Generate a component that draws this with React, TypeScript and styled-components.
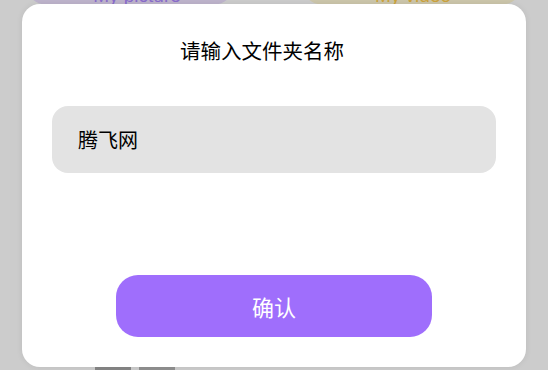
import React from 'react'
import styled, { createGlobalStyle } from 'styled-components'

const GlobalStyle = createGlobalStyle`
  html, body {
    margin: 0;
    padding: 0;
    background: #ffffff;
    overflow: hidden;
  }
  body {
    font-family: "Noto Sans CJK SC", "Noto Sans", sans-serif;
  }
`

export default function App() {
  return (
    <>
      <GlobalStyle />
      <Screen>
        <Page>
          <CardRow>
            <Card tint="#eee2ff" ink="#ad87ff" shift={14}>My picture</Card>
            <Card tint="#fff8d6" ink="#ffcc4a" shift={2}>My video</Card>
          </CardRow>
          <Spacer />
          <ThumbRow>
            <Thumb shade="#a8a8a8" />
            <Thumb shade="#b4b4b4" />
          </ThumbRow>
        </Page>
        <Overlay />
        <Dialog>
          <Title>请输入文件夹名称</Title>
          <NameInput defaultValue="腾飞网" />
          <ConfirmButton>确认</ConfirmButton>
        </Dialog>
      </Screen>
    </>
  )
}

const Screen = styled.div`
  position: relative;
  width: 548px;
  height: 370px;
  overflow: hidden;
`

const Page = styled.div`
  display: flex;
  flex-direction: column;
  height: 370px;
  padding: 0 24px;
  box-sizing: border-box;
`

const CardRow = styled.div`
  display: grid;
  grid-template-columns: 212px 224px;
  justify-content: space-between;
  margin-top: -40px;
`

const Card = styled.div<{ tint: string; ink: string; shift: number }>`
  height: 45px;
  border-radius: 0 0 24px 24px;
  background: ${(p) => p.tint};
  color: ${(p) => p.ink};
  font-family: "Liberation Sans", Arial, sans-serif;
  font-size: 19px;
  display: flex;
  align-items: flex-end;
  justify-content: center;
  line-height: 1;
  padding-left: ${(p) => p.shift}px;
  box-sizing: border-box;
`

const Spacer = styled.div`
  flex: 1;
`

const ThumbRow = styled.div`
  display: flex;
  gap: 8px;
  padding-left: 71px;
  margin-bottom: -30px;
`

const Thumb = styled.div<{ shade: string }>`
  width: 36px;
  height: 33px;
  background: ${(p) => p.shade};
`

const Overlay = styled.div`
  position: absolute;
  inset: 0;
  background: rgba(0, 0, 0, 0.2);
`

const Dialog = styled.div`
  position: absolute;
  left: 22px;
  top: 4px;
  width: 504px;
  height: 363px;
  box-sizing: border-box;
  background: #ffffff;
  border-radius: 18px;
  box-shadow: 0 0 6px rgba(0, 0, 0, 0.08);
  display: flex;
  flex-direction: column;
  align-items: center;
  padding: 32px 30px 30px;
`

const Title = styled.div`
  font-size: 20.5px;
  line-height: 28px;
  color: #000000;
  margin-bottom: 42px;
  padding-right: 24px;
`

const NameInput = styled.input`
  width: 100%;
  height: 67px;
  box-sizing: border-box;
  border: none;
  outline: none;
  border-radius: 16px;
  background: #e3e3e3;
  padding: 0 26px;
  font-family: "Noto Sans CJK SC", "Noto Sans", sans-serif;
  font-size: 20px;
  color: #000000;
`

const ConfirmButton = styled.button`
  margin-top: auto;
  width: 316px;
  height: 62px;
  border: none;
  border-radius: 22px;
  background: #9f6efc;
  color: #ffffff;
  font-family: "Noto Sans CJK SC", "Noto Sans", sans-serif;
  font-size: 22px;
  cursor: pointer;
`
